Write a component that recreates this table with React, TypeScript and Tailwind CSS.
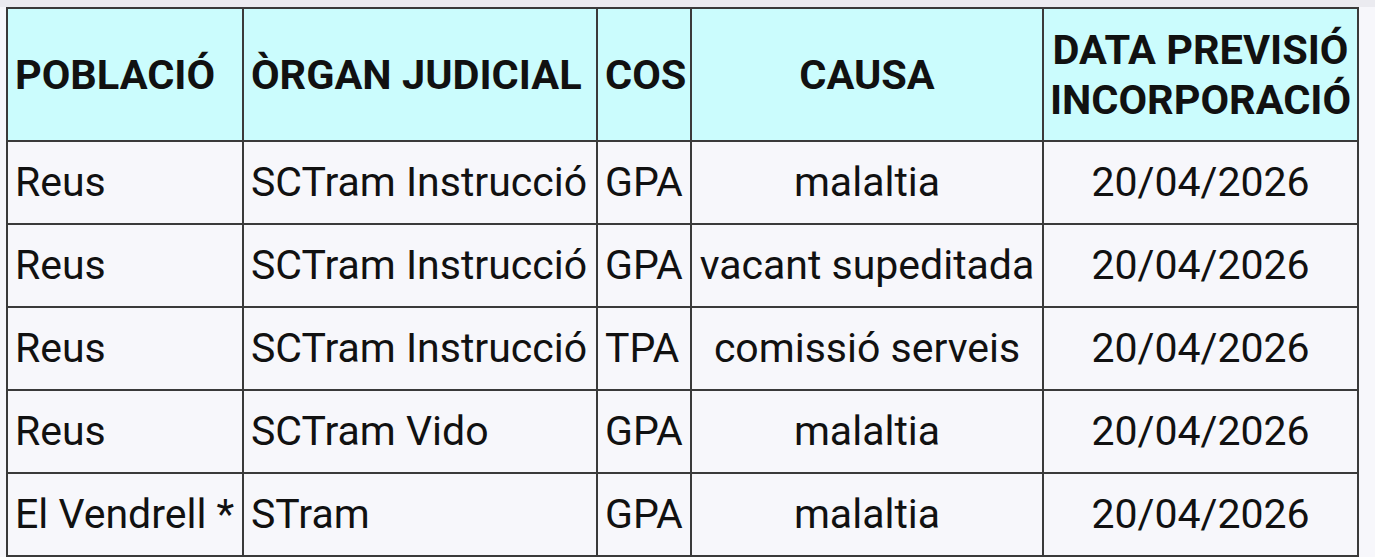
import React from "react";

const rows = [
  ["Reus", "SCTram Instrucció", "GPA", "malaltia", "20/04/2026"],
  ["Reus", "SCTram Instrucció", "GPA", "vacant supeditada", "20/04/2026"],
  ["Reus", "SCTram Instrucció", "TPA", "comissió serveis", "20/04/2026"],
  ["Reus", "SCTram Vido", "GPA", "malaltia", "20/04/2026"],
  ["El Vendrell *", "STram", "GPA", "malaltia", "20/04/2026"],
];

export default function App() {
  return (
    <div
      className="w-[1375px] h-[557px] bg-[#f7f7fb] overflow-hidden"
      style={{ fontFamily: "Roboto, 'Noto Sans', sans-serif" }}
    >
      <div className="h-[7px] bg-[#ebebf0]" />
      <div className="pl-[6px]">
        <table className="border-collapse table-fixed text-[#111111] w-[1351px]">
          <colgroup>
            <col className="w-[236px]" />
            <col className="w-[354px]" />
            <col className="w-[94px]" />
            <col className="w-[352px]" />
            <col className="w-[315px]" />
          </colgroup>
          <thead>
            <tr className="h-[133px] bg-[#cbfcfd]">
              <th className="border-2 border-[#3a3a3a] text-left pl-[7px] text-[41.5px] font-bold leading-[50px]">POBLACIÓ</th>
              <th className="border-2 border-[#3a3a3a] text-left pl-[7px] text-[41.5px] font-bold leading-[50px] whitespace-nowrap">ÒRGAN JUDICIAL</th>
              <th className="border-2 border-[#3a3a3a] text-left pl-[7px] text-[41.5px] font-bold leading-[50px]">COS</th>
              <th className="border-2 border-[#3a3a3a] text-center text-[41.5px] font-bold leading-[50px]">CAUSA</th>
              <th className="border-2 border-[#3a3a3a] text-center text-[41.5px] font-bold leading-[50px] whitespace-nowrap">DATA PREVISIÓ<br />INCORPORACIÓ</th>
            </tr>
          </thead>
          <tbody>
            {rows.map((r, i) => (
              <tr key={i} className="h-[83px] bg-[#f7f7fb]">
                <td className="border-2 border-[#3a3a3a] pl-[7px] text-[41px] whitespace-nowrap">{r[0]}</td>
                <td className="border-2 border-[#3a3a3a] pl-[7px] text-[41px] whitespace-nowrap">{r[1]}</td>
                <td className="border-2 border-[#3a3a3a] pl-[7px] text-[41px] whitespace-nowrap">{r[2]}</td>
                <td className="border-2 border-[#3a3a3a] text-center text-[41px] whitespace-nowrap">{r[3]}</td>
                <td className="border-2 border-[#3a3a3a] text-center text-[41px] whitespace-nowrap">{r[4]}</td>
              </tr>
            ))}
          </tbody>
        </table>
      </div>
    </div>
  );
}
